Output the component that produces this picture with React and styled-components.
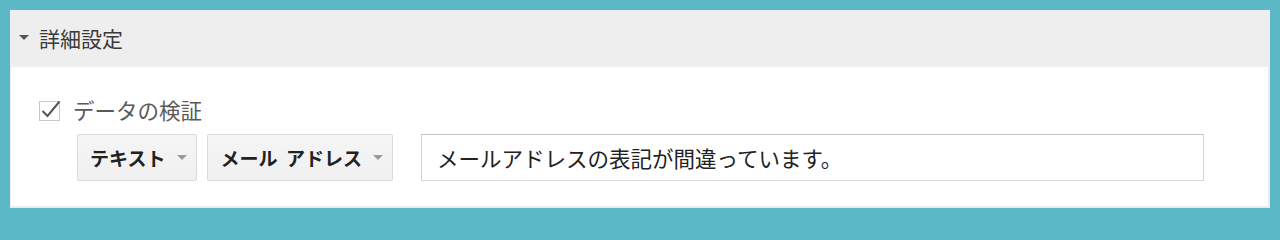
import styled, { createGlobalStyle } from "styled-components";

const Global = createGlobalStyle`
  html, body {
    margin: 0;
    background: #5bb9c7;
  }
  body {
    font-family: "Noto Sans CJK JP", "Noto Sans", sans-serif;
  }
`;

const Frame = styled.div`
  width: 1280px;
  height: 218px;
  box-sizing: border-box;
  padding: 10px;
`;

const Panel = styled.section`
  height: 100%;
  display: flex;
  flex-direction: column;
  background: #fff;
`;

const Header = styled.div`
  height: 57px;
  flex-shrink: 0;
  display: flex;
  align-items: center;
  gap: 10px;
  padding: 0 0 2px 9px;
  box-sizing: border-box;
  background: #eeeeee;
  color: #3a3a3a;
  font-size: 21px;
`;

const Caret = styled.span`
  width: 0;
  height: 0;
  flex-shrink: 0;
  border-left: ${(p) => p.$w / 2}px solid transparent;
  border-right: ${(p) => p.$w / 2}px solid transparent;
  border-top: ${(p) => p.$h}px solid ${(p) => p.$color};
`;

const Body = styled.div`
  flex: 1;
  display: flex;
  flex-direction: column;
  border: 2px solid #ececec;
  border-top: none;
  border-left-width: 1px;
  padding: 28px 0 0 27px;
`;

const CheckRow = styled.label`
  display: flex;
  align-items: center;
  gap: 12px;
  height: 28px;
  color: #5a5a5a;
  font-size: 21.5px;
`;

const Controls = styled.div`
  display: flex;
  align-items: stretch;
  height: 47px;
  margin: 11px 0 0 39px;
`;

const Select = styled.div`
  display: flex;
  align-items: center;
  gap: ${(p) => p.$gap}px;
  box-sizing: border-box;
  padding: 0 9px 0 12px;
  margin-right: ${(p) => p.$mr}px;
  border: 1px solid #dadada;
  border-radius: 2px;
  background: linear-gradient(#f5f5f5, #f0f0f0);
  color: #222;
  font-size: 19px;
  font-weight: 700;
  white-space: pre;
`;

const Input = styled.div`
  width: 783px;
  box-sizing: border-box;
  display: flex;
  align-items: center;
  padding-left: 15px;
  border: 1px solid #d6d6d6;
  border-top-color: #c4c4c4;
  color: #222;
  font-size: 21.5px;
`;

const Check = () => (
  <svg width="23" height="25" viewBox="0 0 23 25">
    <rect x="1.5" y="4.5" width="20" height="19" fill="#fff" stroke="#c9c9c9" />
    <path d="M4.5 14 L9.5 19 L21.5 4.5" fill="none" stroke="#555" strokeWidth="2" />
  </svg>
);

export default function App() {
  return (
    <>
      <Global />
      <Frame>
        <Panel>
          <Header>
            <Caret $w={10} $h={5} $color="#555" />
            詳細設定
          </Header>
          <Body>
            <CheckRow>
              <Check />
              データの検証
            </CheckRow>
            <Controls>
              <Select $gap={12} $mr={10}>
                テキスト
                <Caret $w={11} $h={5} $color="#9a9a9a" />
              </Select>
              <Select $gap={11} $mr={28}>
                メール  アドレス
                <Caret $w={11} $h={5} $color="#9a9a9a" />
              </Select>
              <Input>メールアドレスの表記が間違っています。</Input>
            </Controls>
          </Body>
        </Panel>
      </Frame>
    </>
  );
}
